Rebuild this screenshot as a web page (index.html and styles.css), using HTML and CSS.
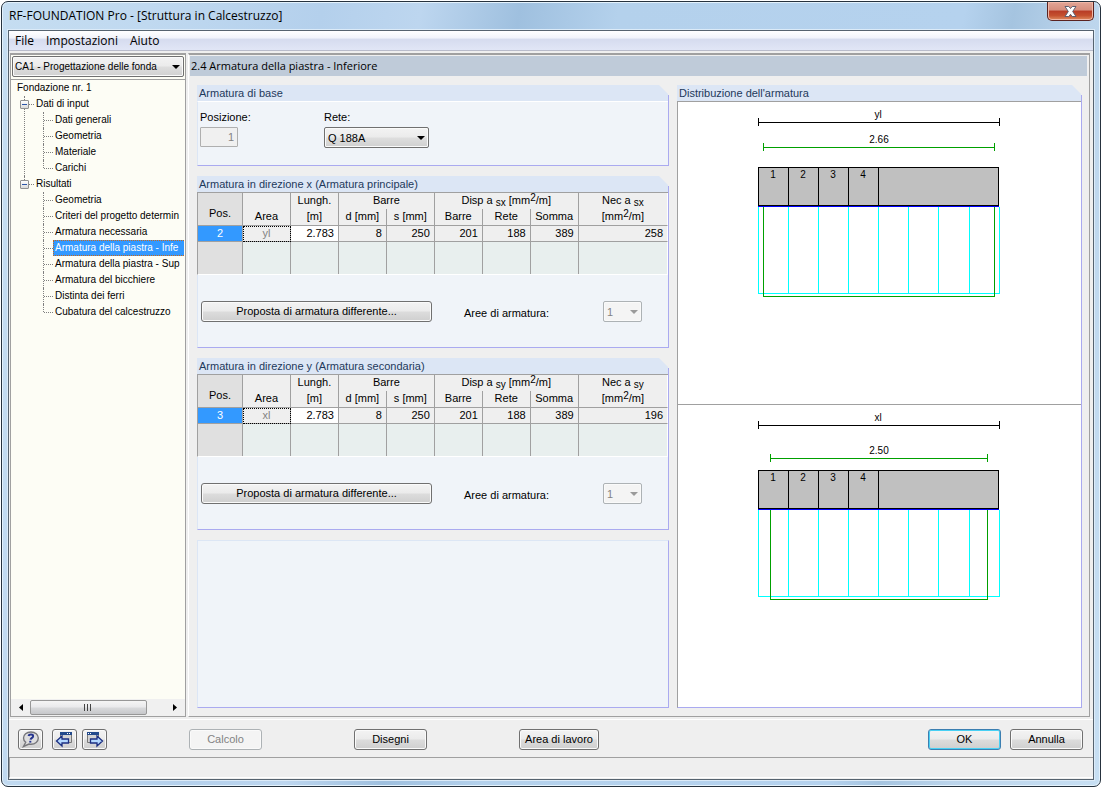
FILE: index.html
```html
<!DOCTYPE html>
<html lang="it">
<head>
<meta charset="utf-8">
<title>RF-FOUNDATION Pro - [Struttura in Calcestruzzo]</title>
<link rel="stylesheet" href="styles.css">
</head>
<body>
<div class="window">
  <header class="titlebar">
    <h1 class="title">RF-FOUNDATION Pro - [Struttura in Calcestruzzo]</h1>
    <button class="close" type="button" aria-label="Chiudi">
      <svg width="13" height="11" viewBox="0 0 13 11" aria-hidden="true"><path d="M1 .5h3.8l1.7 2 1.7-2H12L8.7 5.500 12 10.500H8.200l-1.700-2.200-1.700 2.200H1l3.300-5z" fill="#fff" stroke="#5d5f70"/></svg>
    </button>
  </header>
  <div class="client">
    <nav class="menubar">
      <button type="button">File</button><button type="button">Impostazioni</button><button type="button">Aiuto</button>
    </nav>
    <div class="workspace">
      <aside class="sidebar">
        <div class="combo combo-case"><select aria-label="Caso di progetto"><option>CA1 - Progettazione delle fonda</option></select></div>
        <div class="tree">
          <div class="tree-root">Fondazione nr. 1</div>
          <ul class="branches">
            <li><button class="toggle" type="button" aria-label="Comprimi Dati di input"></button><span class="node">Dati di input</span>
              <ul class="leaves">
                <li>Dati generali</li><li>Geometria</li><li>Materiale</li><li>Carichi</li>
              </ul>
            </li>
            <li><button class="toggle" type="button" aria-label="Comprimi Risultati"></button><span class="node">Risultati</span>
              <ul class="leaves">
                <li>Geometria</li><li>Criteri del progetto determin</li><li>Armatura necessaria</li>
                <li class="selected"><span>Armatura della piastra - Infe</span></li>
                <li>Armatura della piastra - Sup</li><li>Armatura del bicchiere</li><li>Distinta dei ferri</li><li>Cubatura del calcestruzzo</li>
              </ul>
            </li>
          </ul>
        </div>
        <div class="scrollbar">
          <button type="button" aria-label="Scorri a sinistra"><svg width="4" height="7" viewBox="0 0 4 7"><path d="M4 0v7L0 3.500z"/></svg></button>
          <div class="track"><div class="thumb"><svg width="8" height="7" viewBox="0 0 8 7"><path d="M.5 0v7M3.500 0v7M6.500 0v7" stroke="#444"/></svg></div></div>
          <button type="button" aria-label="Scorri a destra"><svg width="4" height="7" viewBox="0 0 4 7"><path d="M0 0v7l4-3.500z"/></svg></button>
        </div>
      </aside>
      <main class="main">
        <h2 class="heading">2.4 Armatura della piastra - Inferiore</h2>
        <div class="panels">
          <div class="column">
            <section class="group">
              <h3>Armatura di base</h3>
              <div class="body base">
                <div class="field"><label for="pos">Posizione:</label><input id="pos" class="number" value="1" disabled></div>
                <div class="field"><label for="rete">Rete:</label><div class="combo combo-mesh"><select id="rete"><option>Q 188A</option></select></div></div>
              </div>
            </section>
            <section class="group">
              <h3>Armatura in direzione x (Armatura principale)</h3>
              <div class="body">
                <table>
                  <colgroup><col class="c-pos"><col><col><col><col><col><col><col><col class="c-nec"></colgroup>
                  <thead>
                    <tr><th rowspan="2" class="pos">Pos.</th><th></th><th>Lungh.</th><th colspan="2">Barre</th><th colspan="3">Disp a <sub>sx</sub> [mm<sup>2</sup>/m]</th><th>Nec a <sub>sx</sub></th></tr>
                    <tr><th>Area</th><th>[m]</th><th>d [mm]</th><th>s [mm]</th><th>Barre</th><th>Rete</th><th>Somma</th><th>[mm<sup>2</sup>/m]</th></tr>
                  </thead>
                  <tbody>
                    <tr><th class="picked">2</th><td class="area">yl</td><td class="edit">2.783</td><td>8</td><td>250</td><td>201</td><td>188</td><td>389</td><td>258</td></tr>
                    <tr class="empty"><th class="pos"></th><td></td><td></td><td></td><td></td><td></td><td></td><td></td><td></td></tr>
                  </tbody>
                </table>
                <div class="actions">
                  <button class="btn wide" type="button">Proposta di armatura differente...</button>
                  <label for="areex">Aree di armatura:</label>
                  <div class="combo combo-small"><select id="areex" disabled><option>1</option></select></div>
                </div>
              </div>
            </section>
            <section class="group">
              <h3>Armatura in direzione y (Armatura secondaria)</h3>
              <div class="body">
                <table>
                  <colgroup><col class="c-pos"><col><col><col><col><col><col><col><col class="c-nec"></colgroup>
                  <thead>
                    <tr><th rowspan="2" class="pos">Pos.</th><th></th><th>Lungh.</th><th colspan="2">Barre</th><th colspan="3">Disp a <sub>sy</sub> [mm<sup>2</sup>/m]</th><th>Nec a <sub>sy</sub></th></tr>
                    <tr><th>Area</th><th>[m]</th><th>d [mm]</th><th>s [mm]</th><th>Barre</th><th>Rete</th><th>Somma</th><th>[mm<sup>2</sup>/m]</th></tr>
                  </thead>
                  <tbody>
                    <tr><th class="picked">3</th><td class="area">xl</td><td class="edit">2.783</td><td>8</td><td>250</td><td>201</td><td>188</td><td>389</td><td>196</td></tr>
                    <tr class="empty"><th class="pos"></th><td></td><td></td><td></td><td></td><td></td><td></td><td></td><td></td></tr>
                  </tbody>
                </table>
                <div class="actions">
                  <button class="btn wide" type="button">Proposta di armatura differente...</button>
                  <label for="areey">Aree di armatura:</label>
                  <div class="combo combo-small"><select id="areey" disabled><option>1</option></select></div>
                </div>
              </div>
            </section>
            <div class="group-blank"></div>
          </div>
          <section class="group distribution">
            <h3>Distribuzione dell'armatura</h3>
            <div class="canvas">
              <div class="view">
                <svg class="diagram" width="245" height="200" viewBox="0 0 245 200" role="img" aria-label="Distribuzione yl">
                  <path class="dim" d="M1.500 16v8M1.500 20.500h241M242.500 16v8"/>
                  <path class="green" d="M6.500 41v8M6.500 45.500h231M237.500 41v8"/>
                  <path class="block" d="M1.500 65.500h240v38h-240zM31.500 65v38M61.500 65v38M91.500 65v38M121.500 65v38"/>
                  <path class="cyan" d="M1.500 105v86.500h241V105M31.500 105v86M61.500 105v86M91.500 105v86M121.500 105v86M151.500 105v86M181.500 105v86M212.500 105v86"/>
                  <path class="green" d="M6.500 105v89.500h231V105"/>
                  <path class="base-line" d="M1 104.500h241"/>
                  <text x="121" y="16">yl</text><text x="122" y="41">2.66</text>
                  <text x="16" y="76">1</text><text x="46" y="76">2</text><text x="76" y="76">3</text><text x="106" y="76">4</text>
                </svg>
              </div>
              <div class="view">
                <svg class="diagram" width="245" height="200" viewBox="0 0 245 200" role="img" aria-label="Distribuzione xl">
                  <path class="dim" d="M1.500 16v8M1.500 20.500h241M242.500 16v8"/>
                  <path class="green" d="M13.500 49v8M13.500 53.500h217M230.500 49v8"/>
                  <path class="block" d="M1.500 65.500h240v38h-240zM31.500 65v38M61.500 65v38M91.500 65v38M121.500 65v38"/>
                  <path class="cyan" d="M1.500 105v86.500h241V105M31.500 105v86M61.500 105v86M91.500 105v86M121.500 105v86M151.500 105v86M181.500 105v86M212.500 105v86"/>
                  <path class="green" d="M13.500 105v89.500h217V105"/>
                  <path class="base-line" d="M1 104.500h241"/>
                  <text x="121" y="16">xl</text><text x="122" y="49">2.50</text>
                  <text x="16" y="76">1</text><text x="46" y="76">2</text><text x="76" y="76">3</text><text x="106" y="76">4</text>
                </svg>
              </div>
            </div>
          </section>
        </div>
      </main>
    </div>
    <footer class="footer">
      <div class="tools">
        <button class="btn icon" type="button" aria-label="Guida"><svg width="19" height="17" viewBox="0 0 19 17"><path d="M10 1C5.500 1 2.500 3.600 2.500 7c0 1.700.8 3.200 2.200 4.300L2.500 15.500 8 13c.6.100 1.300.2 2 .2 4.200 0 7.300-2.700 7.300-6.200S14.200 1 10 1z" fill="#dededf" stroke="#77777b" stroke-width="1.400"/><path d="M7.500 5C8 2.800 12.400 2.800 12.100 5.300c-.2 1.500-2.300 1.700-2.600 3.400" fill="none" stroke="#26358f" stroke-width="2"/><path d="M8.300 9.800h2v1.800h-2z" fill="#26358f"/></svg></button>
        <button class="btn icon" type="button" aria-label="Precedente"><svg width="19" height="17" viewBox="0 0 19 17"><path d="M5.500 1.500h11v10h-11z" fill="#d4d4d4" stroke="#777"/><path d="M5 1h12v3H5z" fill="#234a8c"/><path d="M12 2h1v1h-1zM14 2h1v1h-1z" fill="#fff"/><path d="M1.500 10l5.500-5V8h6.500v4H7v3z" fill="#b4d8ff" stroke="#1c2f82" stroke-width="1.300"/></svg></button>
        <button class="btn icon" type="button" aria-label="Successivo"><svg width="19" height="17" viewBox="0 0 19 17"><path d="M2.500 1.500h11v10h-11z" fill="#d4d4d4" stroke="#777"/><path d="M2 1h12v3H2z" fill="#234a8c"/><path d="M3 2h1v1H3zM5 2h1v1H5z" fill="#fff"/><path d="M17.500 10l-5.500-5V8H5.500v4H12v3z" fill="#b4d8ff" stroke="#1c2f82" stroke-width="1.300"/></svg></button>
      </div>
      <div class="commands">
        <button class="btn" type="button" disabled>Calcolo</button>
        <button class="btn" type="button">Disegni</button>
        <button class="btn large" type="button">Area di lavoro</button>
      </div>
      <div class="confirm">
        <button class="btn default" type="button">OK</button>
        <button class="btn" type="button">Annulla</button>
      </div>
    </footer>
    <div class="statusbar"></div>
  </div>
</div>
</body>
</html>
```
FILE: styles.css
```css
* { box-sizing: border-box; }
body {
  margin: 0;
  min-height: 100vh;
  display: flex;
  background: #fff;
  color: #000;
  font: 11px/16px "Liberation Sans", Arial, sans-serif;
}
h1, h2, h3, ul { margin: 0; padding: 0; font-weight: normal; list-style: none; }
button, input, select { font: inherit; color: inherit; margin: 0; }

.window {
  flex: 1;
  min-width: 0;
  display: flex;
  flex-direction: column;
  margin: 1px 1px 0;
  padding: 0 6px 6px;
  border: 1px solid #26323e;
  border-radius: 7px;
  box-shadow: inset 0 0 0 1px #e4f2fc;
  background:
    linear-gradient(100deg, #c5ddf1 0, #c0d9f0 12%, #b4d0ec 26%, #bdd6ef 34%, #9fc0df 42%, #b4d1ec 50%, #b5d2ee 78%, #a5c4e0 82%, #bcd5ec 88%, #c7dff3 100%);
}

/* title bar */
.titlebar { display: flex; justify-content: space-between; align-items: flex-start; height: 28px; }
.title { padding: 6px 0 0 1px; font: 12px/16px "Open Sans", "Noto Sans", sans-serif; }
.close {
  display: flex;
  align-items: center;
  justify-content: center;
  width: 47px;
  height: 19px;
  padding: 0;
  border: 1px solid #5a2320;
  border-top: 0;
  border-radius: 0 0 5px 5px;
  box-shadow: inset 0 0 0 1px #f0b8a8;
  background: linear-gradient(#e3a596 0, #d68e7d 45%, #b83c26 50%, #c4502f 75%, #de8c60 100%);
}

/* client area */
.client {
  flex: 1;
  display: flex;
  flex-direction: column;
  border: 1px solid #56636f;
  background: #efefef;
  box-shadow: 0 0 0 1px #dcebf8;
}
.menubar {
  display: flex;
  height: 20px;
  border-bottom: 1px solid #b9bccb;
  background: linear-gradient(#fff 0, #f2f4fb 35%, #d6dcef 45%, #e1e6f6 100%);
}
.menubar button {
  padding: 0 6px;
  border: 0;
  background: none;
  font: 12px/19px "Open Sans", "Noto Sans", sans-serif;
}
.workspace { flex: 1; display: flex; gap: 2px; padding: 2px 3px 2px 1px; }

/* sidebar */
.sidebar {
  width: 176px;
  flex: none;
  display: flex;
  flex-direction: column;
  border: 1px solid #a0a0a0;
  border-top-width: 2px;
  background: #fdfdf5;
  font-size: 10px;
}
.combo { position: relative; display: flex; height: 21px; }
.combo select {
  flex: 1;
  min-width: 0;
  padding: 0 14px 0 3px;
  border: 1px solid #707070;
  border-radius: 2px;
  appearance: none;
  background: linear-gradient(#f3f3f3 0, #ebebeb 48%, #dedede 52%, #d0d0d0 100%);
  box-shadow: inset 0 0 0 1px #fafafa;
}
.combo::after {
  content: "";
  position: absolute;
  top: 9px;
  right: 4px;
  width: 8px;
  height: 4px;
  background: #000;
  clip-path: polygon(0 0, 100% 0, 50% 100%);
  pointer-events: none;
}
.combo select:disabled { color: #838383; border-color: #adb2b5; background: #f4f4f4; opacity: 1; }
.combo:has(:disabled)::after { background: #9a9a9a; }
.combo-case { margin: 1px 1px 0; }
.combo-case select { padding-left: 2px; }
.tree {
  flex: 1;
  margin-top: 2px;
  padding-right: 1px;
  border-top: 1px solid #a0a0a0;
  overflow: hidden;
  white-space: nowrap;
}
.tree-root { padding-left: 6px; }
.branches > li { position: relative; padding-left: 25px; }
.branches > li::before {
  content: "";
  position: absolute;
  left: 13px;
  top: 0;
  height: 100%;
  border-left: 1px dotted #808080;
}
.branches > li:last-child::before { height: 8px; }
.branches > li::after {
  content: "";
  position: absolute;
  left: 17px;
  top: 8px;
  width: 6px;
  border-top: 1px dotted #808080;
}
.toggle {
  position: absolute;
  z-index: 1;
  left: 9px;
  top: 4px;
  width: 9px;
  height: 9px;
  padding: 0;
  border: 1px solid #919191;
  border-radius: 1px;
  background: linear-gradient(#2c56a8, #2c56a8) center / 5px 1px no-repeat, linear-gradient(#fff, #dadada);
}
.leaves > li { position: relative; padding-left: 19px; }
.leaves > li::before {
  content: "";
  position: absolute;
  left: 7px;
  top: 0;
  height: 100%;
  border-left: 1px dotted #808080;
}
.leaves > li:last-child::before { height: 8px; }
.leaves > li::after {
  content: "";
  position: absolute;
  left: 8px;
  top: 8px;
  width: 9px;
  border-top: 1px dotted #808080;
}
.leaves > .selected { padding-left: 17px; }
.selected span {
  display: block;
  padding-left: 1px;
  border: 1px dotted #c8681a;
  border-right: 0;
  line-height: 14px;
  background: #39f;
  color: #fff;
}
.scrollbar { display: flex; height: 17px; padding: 1px; background: #f0f0f0; }
.scrollbar button { display: flex; align-items: center; justify-content: center; width: 18px; padding: 0; border: 0; background: none; }
.track { flex: 1; display: flex; }
.thumb {
  display: flex;
  align-items: center;
  justify-content: center;
  width: 86%;
  border: 1px solid #979797;
  border-radius: 2px;
  background: linear-gradient(#f5f5f5 0, #e9e9eb 48%, #d9dadc 52%, #c6c7ca 100%);
}

/* main panel */
.main {
  flex: 1;
  min-width: 0;
  display: flex;
  flex-direction: column;
  padding: 1px 2px 8px 1px;
  border: 1px solid #a0a0a0;
  border-top-width: 2px;
  border-left-color: #fff;
  background: #efefef;
}
.heading { padding-left: 1px; background: #bfcbd9; font: 11px/20px "Open Sans", "Noto Sans", sans-serif; }
.panels { flex: 1; display: grid; grid-template-columns: 472fr 405fr; gap: 8px; padding: 9px 5px 0 7px; }
.column { display: flex; flex-direction: column; gap: 10px; min-width: 0; }
.group {
  display: flex;
  flex-direction: column;
  min-width: 0;
  background: linear-gradient(#aaaaf0, #aaaaf0) right bottom / 1px calc(100% - 10px) no-repeat;
}
.group h3 {
  padding-left: 2px;
  background: #dce6f5;
  color: #1e395b;
  font-size: 11px;
  clip-path: polygon(0 0, calc(100% - 10px) 0, calc(100% - 1px) 9px, calc(100% - 1px) 100%, 0 100%);
}
.body {
  margin-right: 1px;
  border-left: 1px solid #dce6f5;
  border-bottom: 1px solid #aaaaf0;
  background: #f0f4f9;
}
.base { display: flex; padding: 7px 2px 17px; border-top: 1px solid #fff; }
.field { display: flex; flex-direction: column; gap: 2px; align-items: flex-start; }
.field:first-child { width: 124px; }
.number {
  width: 38px;
  height: 20px;
  padding: 0 3px;
  border: 1px solid #afafaf;
  border-radius: 1px;
  background: #f0f0f0;
  color: #838383;
  text-align: right;
}
.combo-mesh { width: 105px; }
.combo-small { width: 39px; }

table {
  width: calc(100% + 1px);
  margin-left: -1px;
  table-layout: fixed;
  border-collapse: separate;
  border-spacing: 0;
  border-left: 1px solid #a0a0a0;
  border-top: 1px solid #a0a0a0;
  border-bottom: 1px solid #fff;
}
.c-pos { width: 45px; }
.c-nec { width: 19%; }
th, td {
  height: 16px;
  padding: 0;
  border-right: 1px solid #a0a0a0;
  background: #efefef;
  font-weight: normal;
  line-height: 15px;
  white-space: nowrap;
}
thead th { vertical-align: top; }
thead tr + tr th, thead .pos, tbody th, tbody td { border-bottom: 1px solid #a0a0a0; }
thead tr + tr th { height: 17px; }
tr > :last-child { border-right-color: #fff; }
thead .pos { padding-top: 13px; }
.pos { background: #e0e0e0; }
td { padding-right: 4px; text-align: right; }
.edit { background: #fff; }
.picked { background: #39f; color: #fff; }
.area { padding: 0; color: #838383; text-align: center; outline: 1px dotted #000; outline-offset: -1px; }
tbody .empty th, tbody .empty td { height: 32px; border-bottom: 0; }
.empty td { background: #e8efee; }
sub, sup { font-size: 10px; line-height: 0; }
sub { vertical-align: -2px; }
sup { vertical-align: 3px; }

.actions { display: flex; align-items: center; padding: 26px 26px 25px 3px; }
.actions label { margin: 3px auto 0 32px; }

.btn {
  min-width: 73px;
  height: 21px;
  padding: 0 5px;
  border: 1px solid #707070;
  border-radius: 3px;
  background: linear-gradient(#f3f3f3 0, #ebebeb 48%, #dcdcdc 52%, #cfcfcf 100%);
  box-shadow: inset 0 0 0 1px #fafafa;
  line-height: 19px;
}
.btn.wide { width: 231px; }
.btn.large { width: 80px; }
.btn:disabled { border-color: #adb2b5; background: #f4f4f4; color: #838383; }
.btn.default { border-color: #3c7fb1; box-shadow: inset 0 0 0 1px #48d0f4; }
.btn.icon { min-width: 0; width: 25px; display: flex; align-items: center; justify-content: center; padding: 0; }

.group-blank { flex: 1; min-height: 60px; border: 1px solid #aaaaf0; border-top-color: #dce6f5; border-left-color: #dce6f5; background: #f0f4f9; }

/* reinforcement drawing */
.canvas {
  flex: 1;
  display: flex;
  flex-direction: column;
  margin-right: 1px;
  border: 1px solid #a0a0a0;
  border-right: 0;
  border-bottom-color: #aaaaf0;
  background: #fff;
}
.view { flex: 1; display: flex; justify-content: center; align-items: flex-start; }
.view + .view { border-top: 1px solid #a0a0a0; }
.diagram { display: block; }
.diagram path { fill: none; stroke-width: 1; shape-rendering: crispEdges; }
.diagram .dim { stroke: #000; }
.diagram .green { stroke: #00a000; }
.diagram .cyan { stroke: #0ff; }
.diagram .block { fill: #c0c0c0; stroke: #000; }
.diagram .base-line { stroke: #00f; }
.diagram text { font-size: 10px; text-anchor: middle; }

/* footer */
.footer { display: flex; align-items: center; height: 38px; padding: 2px 10px 0 9px; border-top: 1px solid #fff; }
.tools { display: flex; gap: 5px; }
.tools .icon:first-child { margin-right: 4px; }
.commands { display: flex; gap: 92px; margin-left: 82px; }
.confirm { display: flex; gap: 9px; margin-left: auto; }
.statusbar { height: 21px; margin-bottom: 1px; border-top: 1px solid #a0a0a0; border-left: 1px solid #a0a0a0; border-bottom: 1px solid #fff; }
```
